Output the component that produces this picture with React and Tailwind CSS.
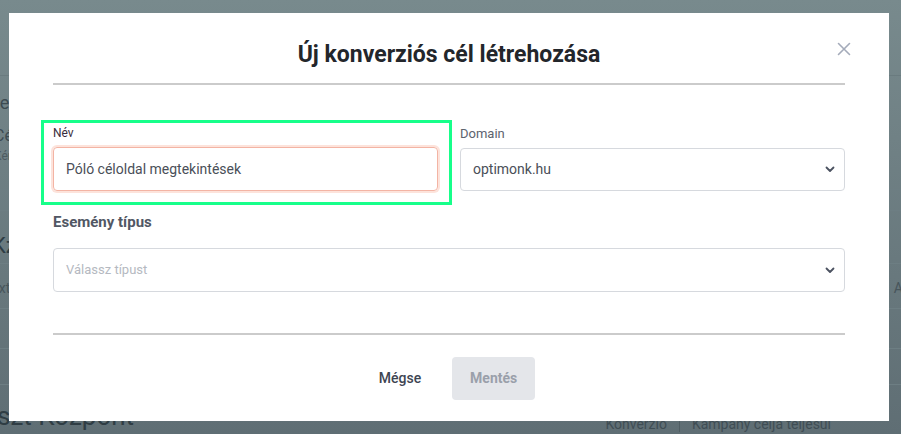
import React from "react";

function Chevron() {
  return (
    <svg width="10" height="7" viewBox="0 0 10 7" fill="none" className="shrink-0">
      <polyline points="1.5,1.5 5,5 8.5,1.5" stroke="#4b5260" strokeWidth="1.8" strokeLinecap="round" strokeLinejoin="round" />
    </svg>
  );
}

export default function App() {
  return (
    <div
      className="relative w-[901px] h-[434px] overflow-hidden bg-gradient-to-b from-[#788a8d] to-[#5f6e74]"
      style={{ fontFamily: "Roboto, 'Noto Sans', sans-serif" }}
    >
      {/* background page (dimmed) */}
      <div className="flex flex-col text-[#3d4b52]">
        <div className="h-[75px]" />
        <div className="h-[114px] border-t border-[#6a7b7f] pt-[17px]">
          <div className="text-[18px] leading-[20px] -ml-[10px]">Leve</div>
          <div className="mt-[14px] text-[16px] leading-[18px] -ml-[6px]">Cé</div>
          <div className="mt-[4px] text-[12px] leading-[14px] text-[#4d5b61] -ml-[6px]">Kér</div>
        </div>
        <div className="h-[21px] border-t border-[#6d7e83]" />
        <div className="h-[53px] border-t border-[#6d7e83] pt-[24px]">
          <div className="text-[22px] leading-[22px] text-[#2f3d44] -ml-[8px]">Kz</div>
        </div>
        <div className="h-[45px] border-t border-[#6d7e83] pt-[16px]">
          <div className="flex justify-between">
            <div className="text-[14px] leading-[16px] text-[#47555b] -ml-[9px]">Txt</div>
            <div className="text-[14px] leading-[16px] text-[#47555b] -mr-[2px]">A</div>
          </div>
        </div>
        <div className="h-[40px] border-t border-[#6d7e83]" />
        <div className="h-[36px] border-t border-[#6d7e83]" />
        <div className="h-[25px] border-t border-[#6d7e83] flex justify-between items-end">
          <div className="text-[26px] leading-[26px] text-[#2f3d44] -ml-[31px] translate-y-[20px]">Teszt Központ</div>
          <div className="flex items-center text-[14px] leading-[16px] text-[#3f4d54] mr-[70px] translate-y-[23px]">
            <span className="pr-[12px]">Konverzió</span>
            <span className="w-px h-[16px] bg-[#4f5d63]" />
            <span className="pl-[12px]">Kampány célja teljesül</span>
          </div>
        </div>
      </div>

      {/* modal */}
      <div className="absolute left-[9px] top-[13px] w-[880px] h-[408px] bg-white px-[44px]">
        <div className="relative h-[70px] pt-[14px] flex items-center justify-center">
          <h1 className="text-[23px] font-bold text-[#23262b] leading-[28px]">Új konverziós cél létrehozása</h1>
          <button className="absolute right-[-6px] top-[29px] w-[14px] h-[14px] flex items-center justify-center">
            <svg width="14" height="14" viewBox="0 0 14 14" fill="none">
              <path d="M1.5 1.5 L12.5 12.5 M12.5 1.5 L1.5 12.5" stroke="#a4abba" strokeWidth="1.6" strokeLinecap="round" />
            </svg>
          </button>
        </div>
        <div className="h-[2px] bg-[#cbcbcb]" />

        <div className="grid grid-cols-2 gap-[22px] mt-[41px]">
          <div className="relative">
            <div className="pointer-events-none absolute left-[-12px] right-[-14px] top-[-6px] bottom-[-14px] border-[3px] border-[#17ff8a]" />
            <label className="block text-[12px] leading-[14px] text-[#3a2d3c] mb-[7px]">Név</label>
            <div className="h-[44px] rounded-[4px] border border-[#f3b4a4] ring-2 ring-[#fde3db] flex items-center px-[12px] text-[14px] text-[#4a4f58]">
              Póló céloldal megtekintések
            </div>
          </div>
          <div>
            <label className="block text-[13px] leading-[14px] text-[#5d636e] mb-[7px] mt-[1px]">Domain</label>
            <div className="h-[43px] rounded-[4px] border border-[#d6d9de] flex items-center justify-between pl-[12px] pr-[9px] text-[14px] text-[#4a4f58]">
              <span>optimonk.hu</span>
              <Chevron />
            </div>
          </div>
        </div>

        <div className="mt-[21px] text-[15px] font-bold leading-[20px] text-[#515764]">Esemény típus</div>
        <div className="mt-[16px] h-[44px] rounded-[4px] border border-[#d6d9de] flex items-center justify-between pl-[12px] pr-[9px] text-[13px] text-[#b5b9c1]">
          <span>Válassz típust</span>
          <Chevron />
        </div>

        <div className="mt-[41px] h-[2px] bg-[#cbcbcb]" />

        <div className="mt-[22px] flex justify-center gap-[15px]">
          <button className="h-[43px] px-[16px] text-[14px] font-medium text-[#3e4552]">Mégse</button>
          <button className="h-[43px] w-[83px] rounded-[4px] bg-[#e4e6ea] text-[14px] font-bold text-[#9aa0aa]">Mentés</button>
        </div>
      </div>
    </div>
  );
}
